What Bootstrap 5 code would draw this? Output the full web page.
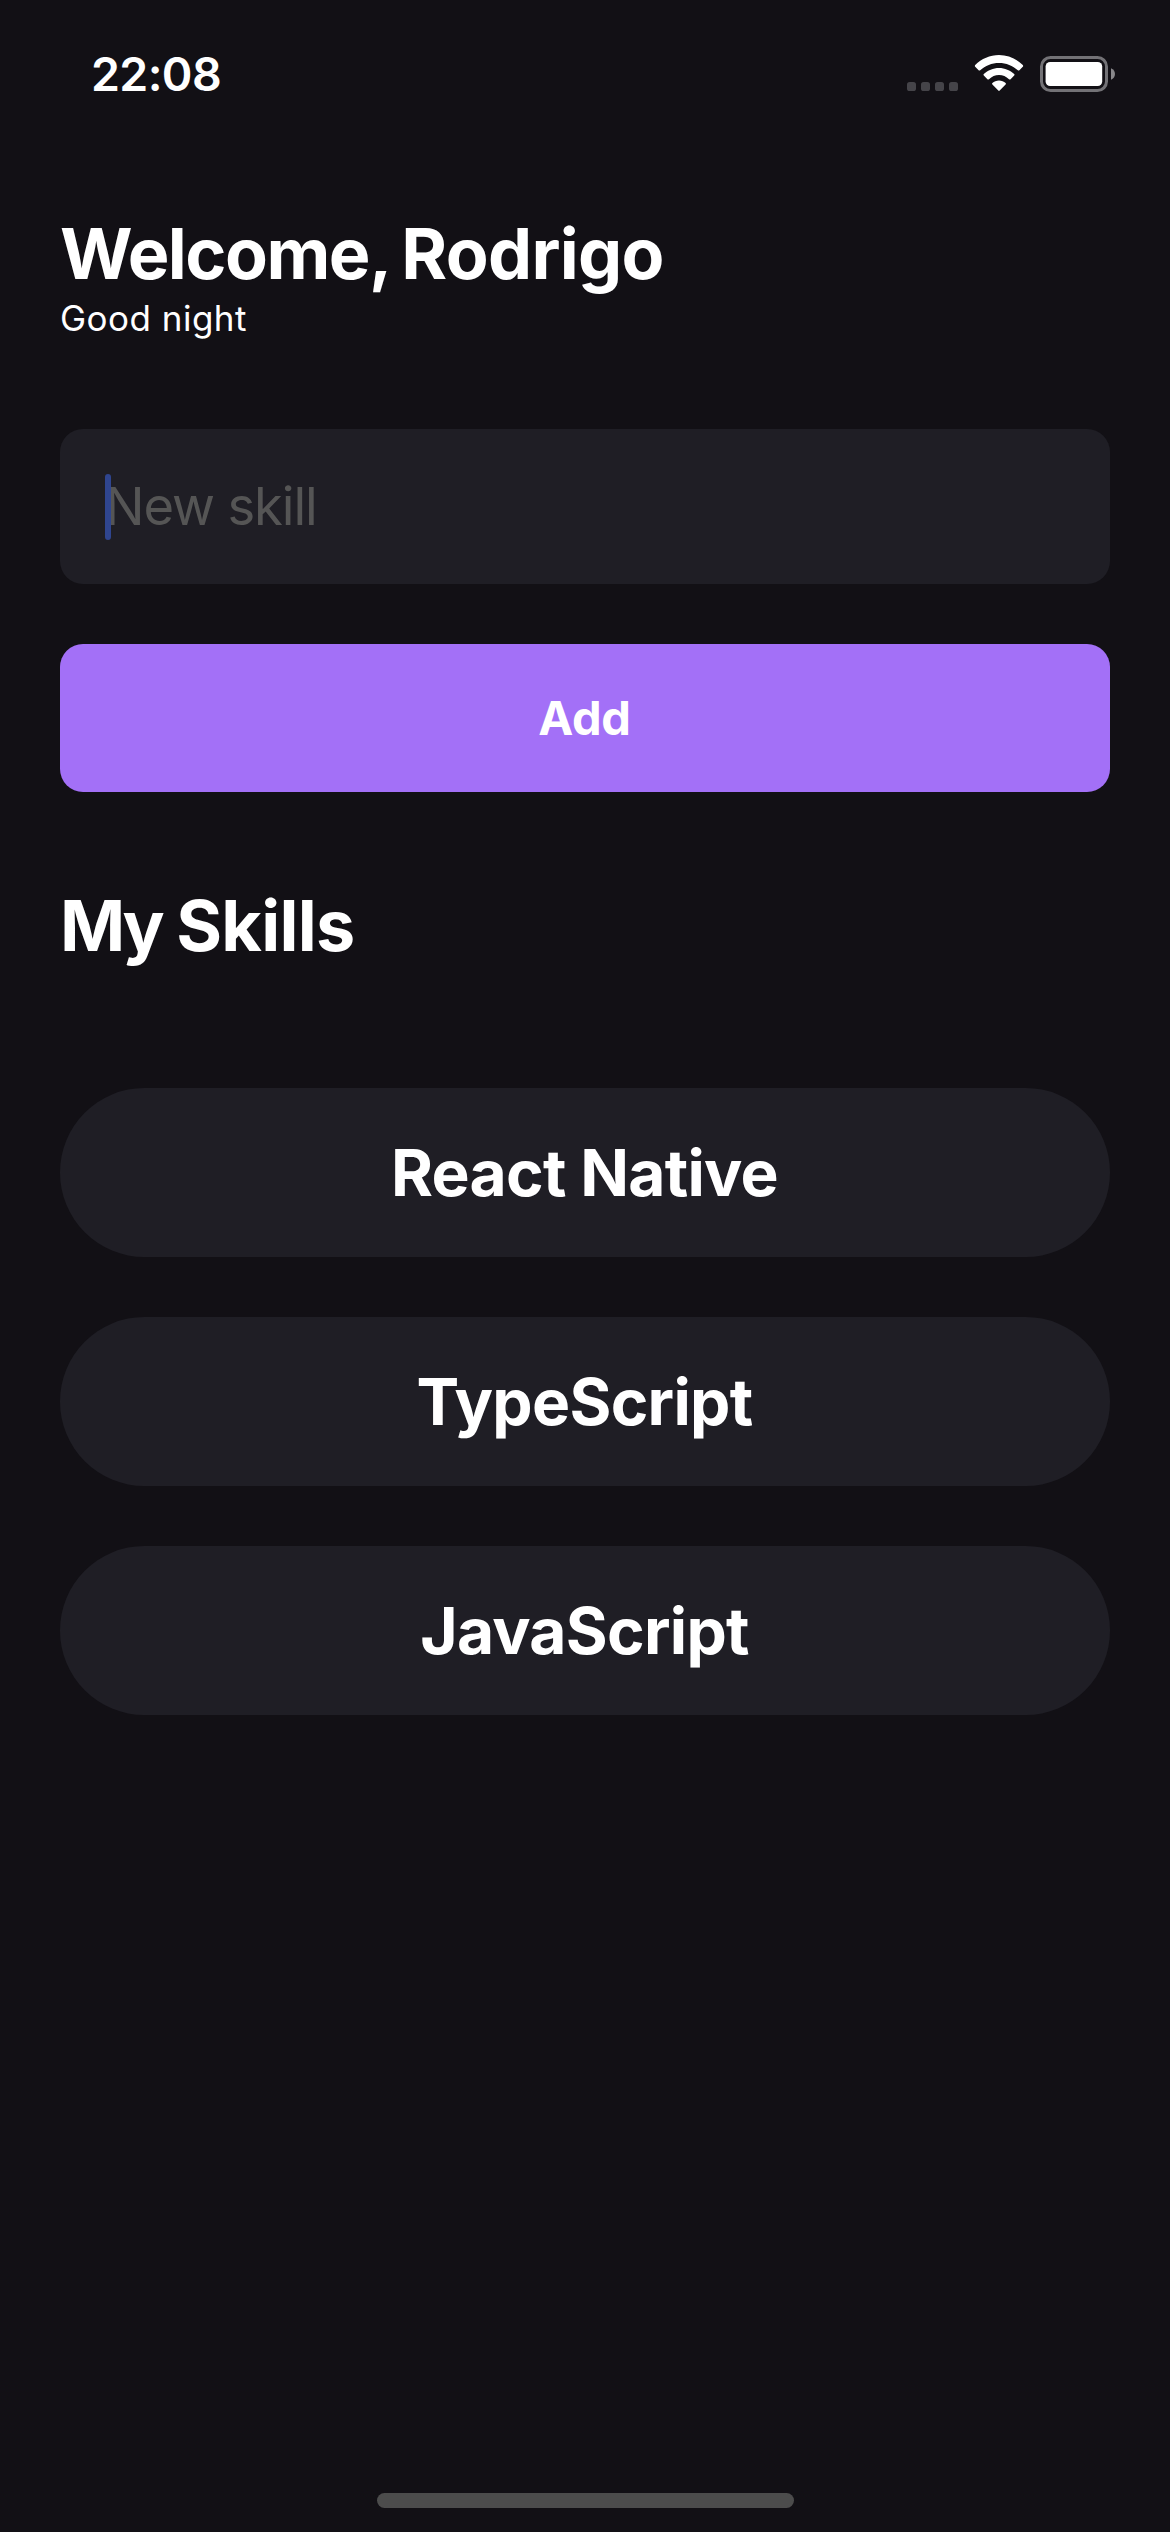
<!DOCTYPE html>
<html lang="en" data-bs-theme="dark">
<head>
<meta charset="utf-8">
<meta name="viewport" content="width=device-width, initial-scale=1">
<title>My Skills</title>
<link href="https://cdn.jsdelivr.net/npm/bootstrap@5.3.0/dist/css/bootstrap.min.css" rel="stylesheet">
<style>
  body { background: #121015; color: #fff; font-family: Inter, "Liberation Sans", sans-serif; }
  .screen { height: 2532px; overflow: hidden; }
  .status-bar { height: 212px; padding: 46px 50px 0 91px; }
  .clock { font-size: 46.5px; font-weight: 600; line-height: 56px; letter-spacing: -.64px; }
  .status-icons { width: 220px; height: 46px; margin-top: 4px; }
  .content { padding: 0 60px; }
  .title { font-size: 70px; font-weight: 700; line-height: 84px; letter-spacing: -1.5px; word-spacing: -2.5px; margin: 0; }
  .user-name { letter-spacing: -.7px; }
  .greeting { font-size: 35px; line-height: 42px; letter-spacing: .48px; margin: 1px 0 90px; }
  .skill-input, .skill-input:focus {
    height: 155px; padding: 44px 45px 46px; border: 0; border-radius: 23px; background: #1f1e25;
    font-size: 52.5px; line-height: 64px; letter-spacing: -1.11px; box-shadow: none;
  }
  .skill-input::placeholder { color: #555; opacity: 1; }
  .caret { left: 45px; top: 45px; width: 6px; height: 66px; border-radius: 3px; background: #2f458f; }
  .btn-add {
    --bs-btn-color: #fff; --bs-btn-bg: #a370f7; --bs-btn-hover-color: #fff; --bs-btn-hover-bg: #925eea;
    height: 148px; margin-top: 60px; border: 0; border-radius: 23px;
    font-size: 47px; font-weight: 700; line-height: 57px; letter-spacing: -.3px; padding: 0 1px 1px 0;
  }
  .heading { margin-top: 92px; letter-spacing: -.7px; word-spacing: -1px; }
  .heading-lead { letter-spacing: -3.4px; }
  .skills { gap: 60px; margin-top: 120px; }
  .skill {
    height: 169px; padding: 46px 47px 46px 46px; border: 0; border-radius: 84.5px; background: #1f1e25; color: #fff;
    font-size: 64px; font-weight: 700; line-height: 77px; letter-spacing: -.7px;
  }
  .home-bar { width: 417px; height: 15px; margin-bottom: 24px; background: #4c4c4c; }
</style>
<script defer src="https://cdn.jsdelivr.net/npm/bootstrap@5.3.0/dist/js/bootstrap.bundle.min.js"></script>
</head>
<body>
<div class="screen d-flex flex-column">
  <header class="status-bar d-flex justify-content-between align-items-start">
    <span class="clock">22:08</span>
    <svg class="status-icons" viewBox="900 50 220 46" aria-hidden="true">
      <g fill="#454449">
        <rect x="907" y="82" width="9" height="9" rx="2.6"/>
        <rect x="921" y="82" width="9" height="9" rx="2.6"/>
        <rect x="935" y="82" width="9" height="9" rx="2.6"/>
        <rect x="949" y="82" width="9" height="9" rx="2.6"/>
      </g>
      <g fill="#fff">
        <path d="M999 55C1008 55 1016.5 58.8 1022.8 65Q1023.5 65.9 1022.8 66.7L1019.4 70.2Q1018.6 70.9 1017.8 70.2C1012.8 65.6 1006.2 62.9 999 62.9S985.2 65.6 980.2 70.2Q979.4 70.9 978.6 70.2L975.2 66.7Q974.5 65.9 975.2 65C981.5 58.8 990 55 999 55Z"/>
        <path d="M999 67.9C1004.8 67.9 1010.2 70.2 1014.2 74Q1015 74.8 1014.2 75.6L1010.6 79.2Q1009.8 79.9 1009 79.2C1006.2 76.7 1002.8 75.1 999 75.1S991.8 76.7 989 79.2Q988.2 79.9 987.4 79.2L983.8 75.6Q983 74.8 983.8 74C987.8 70.2 993.2 67.9 999 67.9Z"/>
        <path d="M999 80.5C1001.5 80.5 1003.9 81.4 1005.6 82.9Q1006.4 83.7 1005.6 84.5L999.7 90.6Q999 91.3 998.3 90.6L992.4 84.5Q991.6 83.7 992.4 82.9C994.1 81.4 996.5 80.5 999 80.5Z"/>
        <rect x="1045.6" y="62" width="56.6" height="24" rx="4.5"/>
      </g>
      <rect x="1041.5" y="57.5" width="65" height="33" rx="9" fill="none" stroke="#737276" stroke-width="3"/>
      <path d="M1111 68.2C1113.5 69.2 1115 71.4 1115 74S1113.5 78.8 1111 79.8Z" fill="#88878a"/>
    </svg>
  </header>

  <main class="content">
    <h1 class="title">Welcome, <span class="user-name">Rodrigo</span></h1>
    <p class="greeting">Good night</p>

    <div class="position-relative">
      <input class="form-control skill-input" type="text" placeholder="New skill" aria-label="New skill">
      <span class="caret position-absolute"></span>
    </div>
    <button class="btn btn-add w-100" type="button">Add</button>

    <h2 class="title heading"><span class="heading-lead">My</span> Skills</h2>
    <div class="skills d-flex flex-column">
      <button class="btn skill w-100" type="button">React Native</button>
      <button class="btn skill w-100" type="button">TypeScript</button>
      <button class="btn skill w-100" type="button">JavaScript</button>
    </div>
  </main>

  <div class="home-bar rounded-pill mx-auto mt-auto"></div>
</div>
</body>
</html>
